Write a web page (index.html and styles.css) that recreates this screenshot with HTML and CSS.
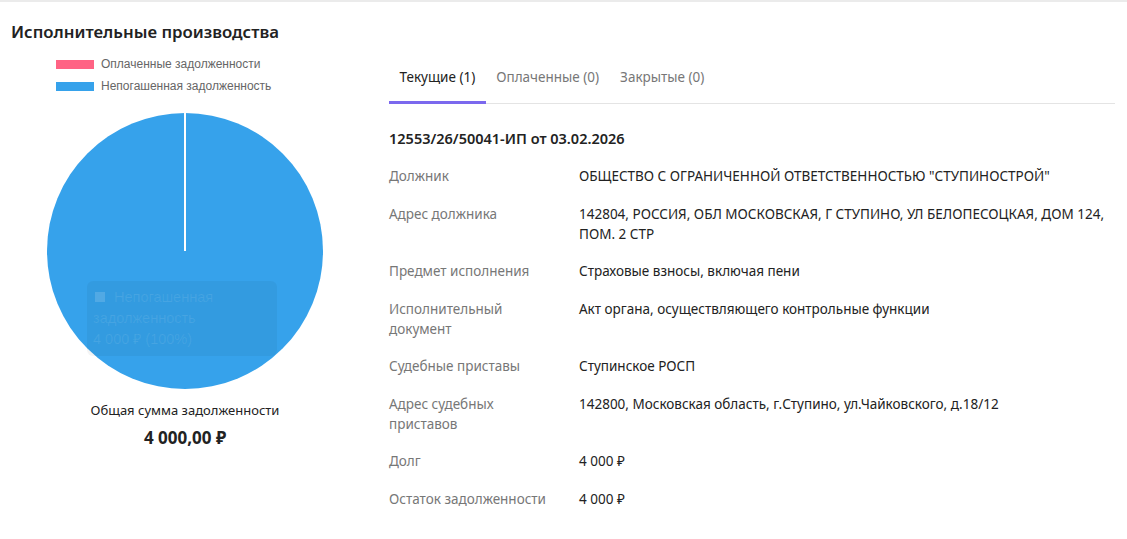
FILE: index.html
```html
<!DOCTYPE html>
<html lang="ru">
<head>
    <meta charset="UTF-8">
    <meta name="viewport" content="width=device-width, initial-scale=1.0">
    <title>Исполнительные производства</title>
    <link rel="stylesheet" href="styles.css">
</head>
<body>
    <div class="page">
        <h2 class="page-title">Исполнительные производства</h2>

        <div class="layout">
            <div class="chart-col">
                <ul class="legend">
                    <li><span class="swatch swatch-paid"></span>Оплаченные задолженности</li>
                    <li><span class="swatch swatch-debt"></span>Непогашенная задолженность</li>
                </ul>

                <div class="pie-wrap">
                    <svg class="pie" width="278" height="278" viewBox="0 0 278 278">
                        <circle cx="139" cy="139" r="138" fill="#36a2eb"/>
                        <line x1="139" y1="0" x2="139" y2="139" stroke="#fff" stroke-width="2"/>
                    </svg>
                    <!-- тултип chart.js в момент затухания -->
                    <div class="pie-tooltip">
                        <div><span class="tip-box"></span>Непогашенная</div>
                        <div>задолженность</div>
                        <div>4 000 ₽ (100%)</div>
                    </div>
                </div>

                <div class="total-label">Общая сумма задолженности</div>
                <div class="total-value">4 000,00 ₽</div>
            </div>

            <div class="info-col">
                <div class="tabs">
                    <div class="tab active">Текущие (1)</div>
                    <div class="tab">Оплаченные (0)</div>
                    <div class="tab">Закрытые (0)</div>
                </div>

                <h3 class="case-title">12553/26/50041-ИП от 03.02.2026</h3>

                <dl class="details">
                    <dt>Должник</dt>
                    <dd>ОБЩЕСТВО С ОГРАНИЧЕННОЙ ОТВЕТСТВЕННОСТЬЮ "СТУПИНОСТРОЙ"</dd>

                    <dt>Адрес должника</dt>
                    <dd>142804, РОССИЯ, ОБЛ МОСКОВСКАЯ, Г СТУПИНО, УЛ БЕЛОПЕСОЦКАЯ, ДОМ 124, ПОМ. 2 СТР</dd>

                    <dt>Предмет исполнения</dt>
                    <dd>Страховые взносы, включая пени</dd>

                    <dt>Исполнительный документ</dt>
                    <dd>Акт органа, осуществляющего контрольные функции</dd>

                    <dt>Судебные приставы</dt>
                    <dd>Ступинское РОСП</dd>

                    <dt>Адрес судебных приставов</dt>
                    <dd>142800, Московская область, г.Ступино, ул.Чайковского, д.18/12</dd>

                    <dt>Долг</dt>
                    <dd>4 000 ₽</dd>

                    <dt>Остаток задолженности</dt>
                    <dd>4 000 ₽</dd>
                </dl>
            </div>
        </div>
    </div>
</body>
</html>
```

FILE: styles.css
```css
body {
    margin: 0;
    font-family: 'Noto Sans', 'Open Sans', sans-serif;
    color: #222;
    background-color: #fff;
}
.page {
    border-top: 2px solid #ebebeb;
    padding: 0 12px 0 11px;
    height: 537px;
}
.page-title {
    margin: 0;
    padding-top: 18px;
    font-size: 16.8px;
    font-weight: 600;
    line-height: 24px;
    color: #222;
}
.layout {
    display: flex;
}

/* левая колонка с диаграммой */
.chart-col {
    width: 348px;
    flex-shrink: 0;
    display: flex;
    flex-direction: column;
    align-items: center;
}
.legend {
    list-style: none;
    margin: 9px 0 0;
    padding: 0 0 0 45px;
    align-self: flex-start;
    font-family: 'Liberation Sans', Arial, sans-serif;
    font-size: 12px;
    color: #666;
}
.legend li {
    display: flex;
    align-items: center;
    height: 22px;
}
.swatch {
    display: inline-block;
    width: 38px;
    height: 9px;
    margin-right: 7px;
}
.swatch-paid {
    background-color: #ff6384;
}
.swatch-debt {
    background-color: #36a2eb;
}
.pie-wrap {
    position: relative;
    margin-top: 15px;
    width: 278px;
    height: 278px;
}
.pie {
    display: block;
}
.pie-tooltip {
    position: absolute;
    left: 41px;
    top: 169px;
    width: 178px;
    padding: 6px 6px;
    border-radius: 6px;
    background-color: rgba(0, 0, 0, 0.045);
    color: rgba(255, 255, 255, 0.09);
    font-family: 'Liberation Sans', Arial, sans-serif;
    font-size: 14.5px;
    line-height: 21px;
}
.tip-box {
    display: inline-block;
    width: 10px;
    height: 10px;
    margin: 0 9px 0 2px;
    background-color: rgba(255, 255, 255, 0.15);
}
.total-label {
    margin-top: 10px;
    font-size: 13px;
    line-height: 20px;
}
.total-value {
    margin-top: 6px;
    font-size: 17px;
    font-weight: 700;
    line-height: 24px;
}

/* правая колонка */
.info-col {
    flex: 1;
    margin-left: 30px;
}
.tabs {
    display: flex;
    margin-top: 11px;
    border-bottom: 1px solid #e4e4e4;
}
.tab {
    padding: 12px 10.5px 14px;
    font-size: 13.5px;
    line-height: 20px;
    color: #777;
    border-bottom: 3px solid transparent;
    margin-bottom: -1px;
}
.tab.active {
    color: #222;
    border-bottom-color: #7b68ee;
}
.case-title {
    margin: 23px 0 0;
    font-size: 14.5px;
    font-weight: 600;
    line-height: 22px;
}
.details {
    display: grid;
    grid-template-columns: 190px 1fr;
    row-gap: 17.5px;
    margin: 17px 0 0;
    font-size: 13.5px;
    line-height: 20px;
}
.details dt {
    color: #777;
    padding-right: 20px;
}
.details dd {
    margin: 0;
    color: #222;
}
```
